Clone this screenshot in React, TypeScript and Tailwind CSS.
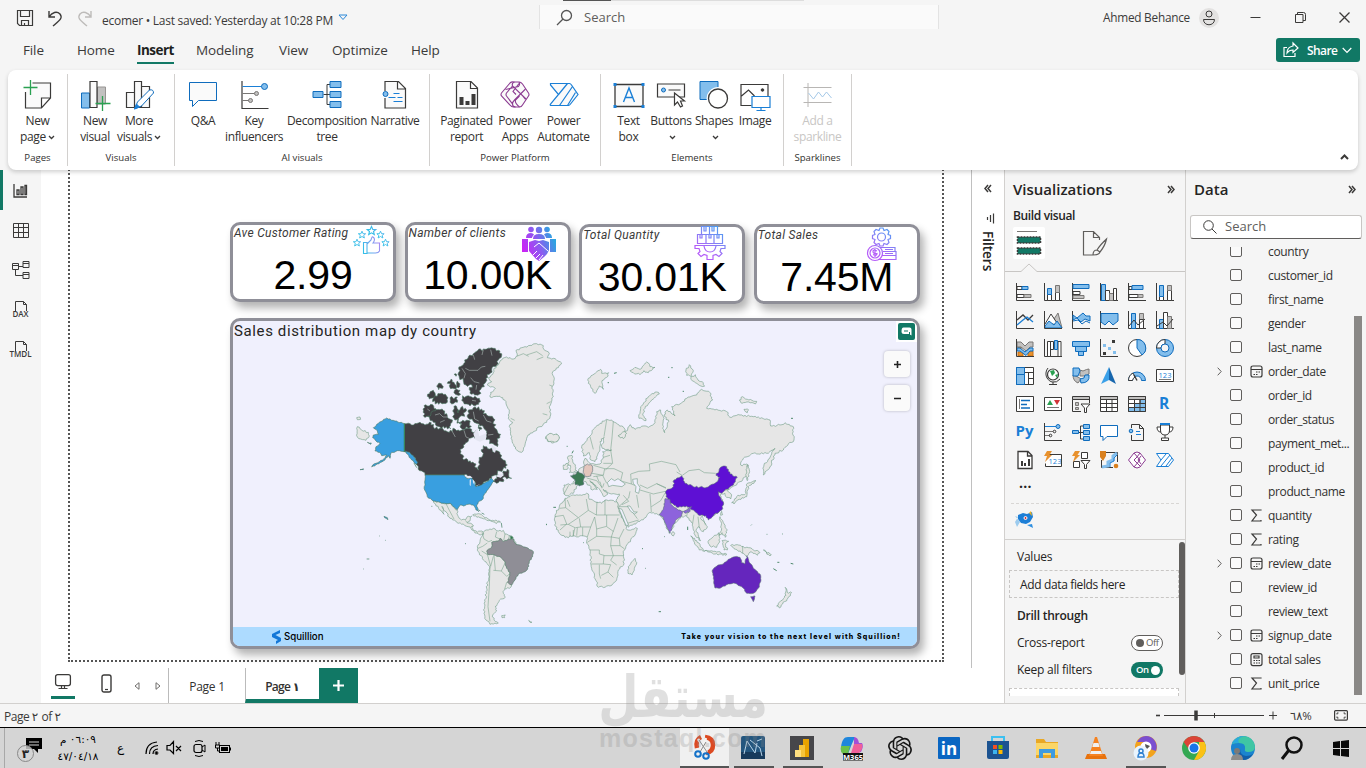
import type { ReactNode } from 'react'
import { SiOpenai } from 'react-icons/si'

const DARK = '#3b3a39'
const BLUE = '#1a7fd6'
const LIGHT = '#83beec'
const GRAY = '#c2c1c0'

type IconProps = {
  w?: number
  h?: number
  box?: string
  className?: string
  children: ReactNode
}

const Icon = ({ w = 18, h, box, className, children }: IconProps) => (
  <svg
    width={w}
    height={h ?? w}
    viewBox={box ?? `0 0 ${w} ${h ?? w}`}
    fill="none"
    stroke={DARK}
    strokeWidth={1}
    className={`shrink-0 overflow-visible ${className ?? ''}`}
  >
    {children}
  </svg>
)

const Chevron = ({ className }: { className?: string }) => (
  <Icon w={7} h={5} className={`inline-block ${className ?? ''}`}>
    <path d="M1 1l2.5 2.5L6 1" strokeWidth={1.3} />
  </Icon>
)

/* Title bar */

const TitleBar = () => (
  <header className="flex h-[35px] items-center text-xs text-[#3b3a39]">
    <div className="flex w-[93px] items-center gap-3.5 pl-[17px]">
      <Icon w={16}>
        <path d="M.5.5h15v15h-13l-2-2zM3.500.5v6h9v-6M4.500 15.500v-5h7v5M7.500 13v2" strokeWidth={1.2} />
      </Icon>
      <Icon w={16}>
        <path d="M2 1v6h6M2 7C5 2 10 1 13 4c3 4 0 6-7 12" strokeWidth={1.4} />
      </Icon>
      <Icon w={16}>
        <path d="M14 1v6H8M14 7C11 2 6 1 3 4c-3 4 0 6 7 12" stroke="#bdbbb9" strokeWidth={1.4} />
      </Icon>
    </div>
    <div className="flex w-[446px] items-center gap-[5px] pt-1.5 pl-[9px]">
      <span className="w-[231px] text-[12px] tracking-[-0.022em] whitespace-nowrap">
        ecomer • Last saved: Yesterday at 10:28 PM
      </span>
      <Icon w={10} h={7} className="mb-1.5">
        <path d="M1 1h8L5 5.500z" stroke="#2b88d8" />
      </Icon>
    </div>
    <div className="h-full w-[400px]">
      <div className="mx-6 flex h-[5px] items-start">
        <div className="h-px w-12 bg-[#555]" />
        <div className="h-px w-[193px] bg-[#ddd]" />
      </div>
      <div className="flex h-6 items-center gap-[11px] border-x border-[#e3e3e3] bg-[#fafafa] pl-4">
        <Icon w={17}>
          <path d="M15.500 6.500a5 5 0 1 1-10 0a5 5 0 1 1 10 0M7 10l-6 6" stroke="#555" strokeWidth={1.300} />
        </Icon>
        <span className="pt-px text-[13px] text-[#605e5c]">Search</span>
      </div>
    </div>
    <div className="flex grow items-center justify-end">
      <span className="text-[11.8px] tracking-[-0.02em]">Ahmed Behance</span>
      <div className="ml-[9px] flex size-5 items-center justify-center rounded-full bg-[#e3e2e1]">
        <Icon w={14} h={16}>
          <circle cx="7" cy="4" r="3" />
          <path d="M1.500 9.500h11c0 7-11 7-11 0z" />
        </Icon>
      </div>
      <Icon w={11} className="ml-[31px]">
        <path d="M.5 5.500h10" />
      </Icon>
      <Icon w={11} className="ml-[34px]">
        <path d="M.5 2.500h7.500v8H.5zM2.500 2.500V.5h6q2 0 2 2v6H8" />
      </Icon>
      <Icon w={11} className="mr-4 ml-[33px]">
        <path d="M.5.5l10 10M10.500.5l-10 10" strokeWidth={1.300} />
      </Icon>
    </div>
  </header>
)

const Menu = () => (
  <nav className="flex h-[35px] items-start pt-[3px] text-[13.5px] tracking-[-0.01em] text-[#3b3a39]">
    <span className="w-[55px] pt-0.5 pl-[23px]">File</span>
    <span className="w-[81px] pt-0.5 pl-[22px]">Home</span>
    <span className="ml-px h-[26px] w-[37px] border-b-2 border-[#117865] pt-0.5 text-center font-bold tracking-[-0.04em] text-[#201f1e]">
      Insert
    </span>
    <span className="w-[83px] pt-0.5 pl-[22px]">Modeling</span>
    <span className="w-[53px] pt-0.5 pl-[22px]">View</span>
    <span className="w-[79px] pt-0.5 pl-[22px]">Optimize</span>
    <span className="pt-0.5 pl-[22px]">Help</span>
    <div className="mr-1.5 ml-auto flex h-6 w-[84px] items-center rounded-[3px] bg-[#117865] pl-[7px] text-xs font-semibold text-white">
      <Icon w={16}>
        <path d="M4 5.500H1v9h11V11M10 1l5 5-5 4.500V8Q6 8 4 11Q4 5 10 4z" stroke="#fff" strokeWidth={1.200} />
      </Icon>
      <span className="ml-2 w-[35px] pt-px tracking-[-0.05em]">Share</span>
      <Icon w={10} h={7}>
        <path d="M.7 1L5 5.500 9.300 1" stroke="#fff" strokeWidth={1.200} />
      </Icon>
    </div>
  </nav>
)

/* Ribbon */

const ChatShape = () => <path d="M1 2.500h27v18H10l-6 6v-6H1z" stroke="#0f6cbd" fill="#fafafa" />

const ribbonIcons: Record<string, ReactNode> = {
  newPage: (
    <>
      <path d="M9 3h18v15l-9 10H2V12M27 18h-9v10" fill="#fafafa" strokeWidth={1.200} />
      <path d="M7 0v15M0 7.500h14" stroke="#2aa151" strokeWidth={1.300} />
    </>
  ),
  newVisual: (
    <>
      <path d="M1 13h8v15H1z" fill={LIGHT} stroke="#0f6cbd" />
      <path d="M17 7h8v17h-8z" fill={GRAY} stroke="#979593" />
      <path d="M9.500 1.500h7v26h-7z" fill="#fafafa" strokeWidth={1.200} />
      <path d="M22 16v15M15 23.500h15" stroke="#2aa151" strokeWidth={1.300} />
    </>
  ),
  moreVisuals: (
    <>
      <path d="M2 12.500h8v15H2zM10 1.500h7v26h-7zM17 6.500h8v21h-8z" fill="#fafafa" strokeWidth={1.200} />
      <path d="M10 29l3-7L25 10q4-1 4 3L17 26z" fill="#fff" stroke="#0f6cbd" />
      <path d="M10 29l2-5 3 3z" fill={BLUE} stroke={BLUE} />
    </>
  ),
  chat: <ChatShape />,
  influencers: (
    <>
      <path d="M2.500 1v27.500H29" strokeWidth={1.200} />
      <path d="M3 6.500h19" stroke={BLUE} />
      <path d="M3 13.500h12M3 20.500h7" stroke="#797775" />
      <circle cx="25" cy="6.500" r="3" fill={LIGHT} stroke="#0f6cbd" />
      <circle cx="17" cy="13.500" r="2" fill={GRAY} stroke="#797775" />
      <circle cx="11" cy="20.500" r="2" fill={GRAY} stroke="#797775" />
    </>
  ),
  tree: (
    <>
      <path d="M11 14.500h7M14.500 4.500v20M14.500 4.500h4M14.500 24.500h4" />
      <path
        d="M.5 11.500h10v6H.5zM17.500 1.500h11v6h-11zM17.500 11.500h11v6h-11zM17.500 21.500h11v6h-11z"
        fill={LIGHT}
        stroke="#0f6cbd"
      />
    </>
  ),
  narrative: (
    <>
      <path d="M4.500 11V1.500H18l7 7V28H4.500V18M17 1.500V9h8" strokeWidth={1.200} fill="#fafafa" />
      <path d="M13 13.500h6M8 17.500h7M17 17.500h5M13 21.500h9" stroke={BLUE} />
      <circle cx="5" cy="14" r="2.500" fill={LIGHT} stroke="#0f6cbd" />
    </>
  ),
  paginated: (
    <>
      <path d="M4 1.500h14.500L25 8v20H4zM18 2v6.500h7" strokeWidth={1.200} fill="#fafafa" />
      <path d="M7 17h4v8H7zM13 21h4v4h-4zM19 14h4v11h-4z" fill={DARK} stroke="none" />
    </>
  ),
  apps: (
    <g stroke="#8c3c92" strokeWidth={1.100}>
      <path d="M9.500 3q1.500-1.500 4-1l5 0q2 0 3.500 2L28 13q1 1.500 0 3l-6 9q-1 2-3 2h-6q-2 0-3.500-2L1 16q-1-1.500 0-3z" fill="#fafafa" />
      <path d="M14 2q-3 1-2 4l13.500 13M18.500 2Q20 4 18 6.500L5 9.500M12 6L6 13q-1 1.500 0 3l6 8q0 3 3 3M12 24q0-2 2-4L25 9M15.500 14.500l-3-3 6-8M19 27q-5-4-4-7l4-4M21 14.500l4 5" />
    </g>
  ),
  automate: (
    <g stroke={BLUE} strokeWidth={1.200}>
      <path d="M1 3.500h19q1 0 2 1.500l6.500 9.500L21 24q-1 1.500-2 1.500H2Q0 25.500 1 24l8-9.500L1 5z" fill="#fafafa" />
      <path d="M10 25.500l13-19M18 25.500l8-13M9 14.500l9-11" />
    </g>
  ),
  textBox: (
    <>
      <path d="M.5 4.500h28v22H.5z" strokeWidth={1.300} fill="#fafafa" />
      <path d="M-1 3h3v3h-3zM27 3h3v3h-3zM-1 25h3v3h-3zM27 25h3v3h-3z" fill={BLUE} stroke="none" />
      <path d="M9 22l5.500-14L20 22M11 17.500h7" stroke={BLUE} strokeWidth={1.400} />
    </>
  ),
  buttons: (
    <>
      <path d="M1 4h27v13H1z" fill="#fafafa" strokeWidth={1.200} />
      <circle cx="7" cy="10" r="2" fill={LIGHT} stroke="#0f6cbd" />
      <path d="M12 10h12" />
      <path d="M18 13v12l3-3 3 5 2-1-2-5h4z" fill="#fff" strokeWidth={1.200} />
    </>
  ),
  shapes: (
    <>
      <path d="M.5 1.500h18v18H.5z" fill={LIGHT} stroke="#0f6cbd" />
      <circle cx="18.500" cy="18.500" r="11" fill="#fff" stroke="#fff" />
      <circle cx="18.500" cy="18.500" r="9.500" fill="#fff" strokeWidth={1.300} />
    </>
  ),
  image: (
    <>
      <path d="M11 25.500H.5V4.500h27V16M1 16l7-6 6 6" fill="none" strokeWidth={1.200} />
      <circle cx="22" cy="10" r="1.300" fill={DARK} />
      <path d="M11.500 16.500h18v11h-18zM20.500 28v3M16 30.500h9" fill="#fff" stroke={BLUE} strokeWidth={1.200} />
    </>
  ),
  sparkline: (
    <>
      <path d="M4.500 3v24M0 7.500h28M0 22.500h28" stroke="#b8b6b4" />
      <path d="M5 13l5 6 5-7 4 5 4-5 5 6" stroke="#a5c9e8" />
    </>
  ),
}

type RibbonItem = { icon: string; lines: string[]; width: string; drop?: boolean }

const ribbonGroups: { name: string; frame: string; row?: string; items: RibbonItem[]; muted?: boolean }[] = [
  {
    name: 'Pages',
    frame: 'w-[60px]',
    items: [{ icon: 'newPage', lines: ['New', 'page'], width: 'w-[59px]', drop: true }],
  },
  {
    name: 'Visuals',
    frame: 'w-[107px]',
    row: 'pr-[7px]',
    items: [
      { icon: 'newVisual', lines: ['New', 'visual'], width: 'w-[43px]' },
      { icon: 'moreVisuals', lines: ['More', 'visuals'], width: 'w-[45px]', drop: true },
    ],
  },
  {
    name: 'AI visuals',
    frame: 'w-[255px]',
    row: 'pl-[5px]',
    items: [
      { icon: 'chat', lines: ['Q&A'], width: 'w-[35px]' },
      { icon: 'influencers', lines: ['Key', 'influencers'], width: 'w-[67px]' },
      { icon: 'tree', lines: ['Decomposition', 'tree'], width: 'w-[79px]' },
      { icon: 'narrative', lines: ['Narrative'], width: 'w-[57px]' },
    ],
  },
  {
    name: 'Power Platform',
    frame: 'w-[171px]',
    items: [
      { icon: 'paginated', lines: ['Paginated', 'report'], width: 'w-[57px]' },
      { icon: 'apps', lines: ['Power', 'Apps'], width: 'w-[40px]' },
      { icon: 'automate', lines: ['Power', 'Automate'], width: 'w-[57px]' },
    ],
  },
  {
    name: 'Elements',
    frame: 'w-[183px]',
    row: 'pl-px',
    items: [
      { icon: 'textBox', lines: ['Text', 'box'], width: 'w-[39px]' },
      { icon: 'buttons', lines: ['Buttons', ''], width: 'w-[46px]', drop: true },
      { icon: 'shapes', lines: ['Shapes', ''], width: 'w-[40px]', drop: true },
      { icon: 'image', lines: ['Image'], width: 'w-[42px]' },
    ],
  },
  {
    name: 'Sparklines',
    frame: 'w-[68px]',
    muted: true,
    items: [{ icon: 'sparkline', lines: ['Add a', 'sparkline'], width: 'w-[67px]' }],
  },
]

const Ribbon = () => (
  <section className="relative z-10 mx-2 flex h-[100px] rounded-[8px] bg-white pt-1 shadow-[0_2px_4px_rgba(0,0,0,0.18)]">
    {ribbonGroups.map((group) => (
      <div key={group.name} className={`h-[92px] border-r border-[#d2d0ce] pt-[5px] ${group.frame}`}>
        <div className={`flex h-[71px] justify-center ${group.row ?? ''}`}>
          {group.items.map((item) => (
            <div key={item.icon} className={`flex flex-col items-center ${item.width}`}>
              <Icon w={30} h={31} box="-.5 -1 30 31" className="mb-1">
                {ribbonIcons[item.icon]}
              </Icon>
              {item.lines.map((line, i) => (
                <div
                  key={i}
                  className={`-mt-px mb-px h-4 text-[12px] leading-4 tracking-[-0.03em] whitespace-nowrap ${group.muted ? 'text-[#c8c6c4]' : 'text-[#323130]'}`}
                >
                  {line}
                  {item.drop && i === 1 && <Chevron className="ml-0.5" />}
                </div>
              ))}
            </div>
          ))}
        </div>
        <div className="text-center text-[9.600px] leading-4 text-[#323130]">{group.name}</div>
      </div>
    ))}
    <div className="flex grow items-end justify-end pr-[9px] pb-2.5">
      <Icon w={9} h={6}>
        <path d="M1 5l3.500-3.500L8 5" strokeWidth={2} />
      </Icon>
    </div>
  </section>
)

/* Left rail */

const Rail = () => (
  <aside className="w-[41px] shrink-0 bg-[#f5f5f5] text-[#3b3a39]">
    <div className="flex h-10 items-center border-l-[3px] border-[#117865] pl-2.5">
      <Icon w={15}>
        <path d="M1 1v13h13M4 7h2v4.500H4zM8 4h2v7.500H8zM12 2.500h1.500v9H12z" strokeWidth={1.300} />
      </Icon>
    </div>
    <div className="flex h-10 items-center justify-center">
      <Icon w={16} h={15}>
        <path d="M.5.5h15v14H.5zM.5 4.500h15M.5 9.500h15M5.500.5v14M10.500.5v14" />
      </Icon>
    </div>
    <div className="flex h-10 items-center justify-center">
      <Icon w={18}>
        <path d="M.5 2.500h6v6h-6zM11 .5h6v6h-6zM11 11.500h6v6h-6zM3.500 9v5.500H11M7 5.500h4M.5 4.500h6M11 2.500h6M11 13.500h6" />
      </Icon>
    </div>
    {['DAX', 'TMDL'].map((name) => (
      <div key={name} className="flex h-10 flex-col items-center pt-[11px]">
        <Icon w={14} h={10}>
          <path d="M1.500 10V.5h8l3 3V10M9.500.5v3h3" />
        </Icon>
        <span className="-mt-px h-2 text-[8px] leading-[8px] font-semibold">{name}</span>
      </div>
    ))}
  </aside>
)

/* KPI cards */

const STAR = 'M0-4.500l1.300 3h3l-2.300 2 .8 3L0 1.800l-2.800 1.700.8-3-2.300-2h3z'

const cardArt: Record<string, ReactNode> = {
  rating: (
    <g stroke="url(#cyanViolet)" strokeWidth={1.100}>
      <path d={STAR} transform="translate(3 18) scale(.85)" />
      <path d={STAR} transform="translate(8 10) scale(.85)" />
      <path d={STAR} transform="translate(17.500 6)" />
      <path d={STAR} transform="translate(26.500 10) scale(.85)" />
      <path d={STAR} transform="translate(31.500 18) scale(.85)" />
      <path d="M9.500 17.500H13v11H9.500zM13 19l4-4q1-4 2-3 3 2 0 6h6.500v8q-1 2-4 2H13" />
    </g>
  ),
  clients: (
    <g stroke="none" fill="url(#magentaBlue)">
      <circle cx="10" cy="4.500" r="2.800" />
      <circle cx="18" cy="5" r="3.200" />
      <circle cx="26" cy="4.500" r="2.800" />
      <path d="M5 13q0-5 5-5 2 0 3 1.500Q11 12 11 13zM25 13q0-1-2-3.500Q24 8 26 8q5 0 5 5zM12 14q0-5 6-5t6 5z" />
      <path d="M1 14h6v13H1zM29 14h6v13h-6zM8 17l6-2 4 1 4-1 6 2v8l-2 4-3 3-5 4-3-2-7-8z" />
      <path d="M13 22l5-4 9 8M12 30l4-4M15 33l4-4M18 35l4-5" stroke="#fff" strokeWidth={1} fill="none" />
    </g>
  ),
  quantity: (
    <g stroke="url(#blueViolet)" strokeWidth={1.200}>
      <path d="M7.500 9.500V1.500h8v8M15.500 1.500h8v8M3.500 9.500h25v9h-25zM12 9.500v9M20 9.500v9M10 2v4h2V2M18 2v4h2V2M6 10v3h2v-3M15 10v3h2v-3M23 10v3h2v-3" />
      <path d="M1 20.500h30v3h-4l-1 3 2 2-3 3-3-2-3 1v4h-6v-4l-3-1-3 2-3-3 2-2-1-3H1zM10 21q1 6 6 6t6-6" />
    </g>
  ),
  sales: (
    <g stroke="url(#blueViolet)" strokeWidth={1.200}>
      <path d="M14 2h3l1 2.500 3-1 2 2-1 3 2.500 1v3L22 13.500l1 3-2 2-3-1-1 2.500h-3l-1-2.500-3 1-2-2 1-3-2.500-1v-3L9 8.500l-1-3 2-2 3 1z" />
      <circle cx="15.500" cy="11" r="4" />
      <circle cx="9" cy="27" r="7.500" />
      <circle cx="9" cy="27" r="5" />
      <path d="M11 25q-4-2-4 .5t4 2q0 3-4 1M9 23v8M14 21.500h15v4H17M17 25.500h13v4H17M16 29.500h14v4H12M19 23.500h8M19 27.500h8" />
    </g>
  ),
}

const Gradients = () => (
  <svg width="0" height="0" className="absolute">
    <defs>
      <linearGradient id="cyanViolet" gradientUnits="userSpaceOnUse" x1="8" y1="20" x2="28" y2="12">
        <stop offset="0" stopColor="#35bfe8" />
        <stop offset="0.500" stopColor="#7f9df0" />
        <stop offset="1" stopColor="#c77df5" />
      </linearGradient>
      <linearGradient id="magentaBlue" gradientUnits="userSpaceOnUse" x1="2" y1="26" x2="34" y2="14">
        <stop offset="0" stopColor="#cc22f5" />
        <stop offset="0.500" stopColor="#8a5cf0" />
        <stop offset="1" stopColor="#28a8e0" />
      </linearGradient>
      <linearGradient id="blueViolet" gradientUnits="userSpaceOnUse" x1="30" y1="0" x2="12" y2="28">
        <stop offset="0" stopColor="#38a4f0" />
        <stop offset="0.500" stopColor="#7a88f5" />
        <stop offset="1" stopColor="#b45cf8" />
      </linearGradient>
    </defs>
  </svg>
)

type CardProps = { title: string; value: string; art: string; artPos: string; low?: boolean }

const Card = ({ title, value, art, artPos, low }: CardProps) => (
  <div
    className={`relative h-20 w-[166px] rounded-[10px] border-[3px] border-[#8f8f98] bg-white shadow-[4px_6px_8px_rgba(0,0,0,0.3)] ${low ? 'mt-0.5' : ''}`}
  >
    <div className="h-4 pl-px font-['Roboto'] text-[12px] leading-4 tracking-[0.025em] text-[#3a3a3a] italic">
      {title}
    </div>
    <div className="pt-px text-center font-['Liberation_Sans'] text-[41px] leading-[66px] tracking-[-0.005em] text-black">
      <span className="relative">{value}</span>
    </div>
    <Icon w={36} className={`absolute ${artPos}`}>
      {cardArt[art]}
    </Icon>
  </div>
)

/* World map. Outlines are point lists, roughened between points to look like a coast. */

const noise = (n: number) => {
  const s = Math.sin(n * 12.9898) * 43758.5453
  return s - Math.floor(s) - 0.5
}

const coast = (points: string, rough = 0.350) => {
  const pts = points.split(' ').map((p) => p.split(',').map(Number))
  const out: string[] = []
  pts.forEach(([x, y], i) => {
    const [nx, ny] = pts[(i + 1) % pts.length]
    const dx = nx - x
    const dy = ny - y
    const len = Math.hypot(dx, dy)
    const steps = Math.max(1, Math.round(len / 5))
    out.push(`${x},${y}`)
    if (len > 90 || (x === 193 && nx === 193)) return
    for (let k = 1; k < steps; k++) {
      const t = k / steps
      const off = noise(x + y * 3 + k * 7) * rough * 16
      out.push(`${(x + dx * t - (dy / len) * off).toFixed(1)},${(y + dy * t + (dx / len) * off).toFixed(1)}`)
    }
  })
  return `M${out.join('L')}Z`
}

const west: { fill: string; rough?: number; shapes: string[] }[] = [
  {
    fill: '#e6e6e6',
    shapes: [
      '442,150 455,140 445,128 458,118 462,100 475,90 485,75 500,66 520,72 532,62 528,46 545,38 565,32 590,26 610,32 614,46 628,56 622,68 640,70 665,84 655,98 638,110 643,130 636,160 640,185 628,215 632,240 620,262 600,275 580,290 562,305 555,330 545,352 530,345 518,325 512,300 508,275 518,262 505,250 508,225 498,205 488,188 470,184 450,186 452,172 466,160',
      '617,306 626,298 640,300 650,297 658,308 650,320 635,324 622,318',
      '52,275 65,285 85,292 88,303 78,316 62,312 52,306',
      '50,248 60,246 62,253 52,254',
      '280,498 300,502 318,506 330,505 340,515 352,526 355,545 365,555 378,553 382,545 395,543 390,558 382,562 397,568 400,586 412,592 426,588 430,597 420,600 405,594 390,576 370,567 350,562 330,550 318,530 306,514 312,538 296,520',
      '398,540 415,536 440,548 452,556 440,556 420,548',
      '452,558 468,555 482,562 468,566',
      '412,635 420,620 425,605 430,592 445,585 460,580 475,588 490,586 495,597 510,602 522,612 528,628 500,690 510,720 515,750 508,760 495,762 490,775 496,786 478,796 465,815 470,828 458,840 462,855 475,864 450,868 438,855 432,835 435,800 440,760 446,720 450,695 430,675 415,650',
      '485,842 496,840 494,848 486,848',
      '566,856 576,862 570,862',
    ],
  },
  {
    fill: '#414044',
    rough: 0.650,
    shapes: [
      '193,350 193,266 215,270 240,262 255,270 268,262 280,275 300,280 322,290 345,282 370,285 388,280 395,290 410,285 412,300 405,310 395,308 385,318 370,330 363,350 368,370 385,380 402,385 410,398 416,405 420,388 418,375 428,362 425,350 430,332 440,335 455,340 462,352 470,347 480,358 490,375 502,390 498,400 480,408 465,420 455,430 440,438 425,450 405,455 403,440 395,428 372,420 255,420 245,408 235,395 230,380 215,362 203,352',
      '465,432 475,420 492,418 490,408 502,402 506,418 515,430 500,432 492,425 490,440 470,445 456,440',
      '372,85 385,65 400,56 412,48 440,42 460,40 480,48 485,62 475,75 470,90 455,105 448,118 438,130 435,145 424,160 418,178 395,178 388,164 396,150 378,150 370,138 358,128 356,102 366,92',
      '385,225 400,218 425,222 440,240 460,250 465,280 482,298 474,318 472,335 455,325 435,310 440,295 430,275 402,262 385,250',
      '272,228 300,224 320,236 336,262 332,282 300,276 280,262 262,244',
      '252,212 272,208 288,222 270,244 250,242',
      '338,228 348,212 354,234 362,218 376,220 374,244 356,250 362,268 342,250',
      '368,182 395,186 418,190 416,208 385,208 370,200',
      '330,188 352,186 352,202 330,202',
      '285,182 300,176 320,184 322,202 296,208 278,200',
      '262,184 280,166 286,178 268,192',
      '290,154 304,146 308,160 296,164',
      '324,140 334,132 342,142 350,156 338,160 328,152',
      '352,138 360,146 356,158 350,150',
      '344,166 360,166 362,178 346,178',
      '360,262 384,256 394,274 376,282 360,276',
      '416,270 426,282 418,288',
      '342,118 348,116 348,124',
    ],
  },
  {
    fill: '#399fe0',
    rough: 0.2,
    shapes: [
      '255,420 372,420 380,430 395,430 405,440 408,455 425,450 440,440 455,430 462,438 450,455 440,468 432,480 430,490 415,502 410,510 416,530 408,525 400,510 385,508 370,513 362,510 352,524 340,515 330,505 318,506 300,502 280,498 262,485 254,465 254,440',
      '100,278 118,262 140,249 165,258 193,266 193,350 178,347 168,349 155,352 150,370 145,362 130,378 112,387 95,396 98,390 118,380 135,368 140,360 125,362 118,352 105,348 108,335 120,325 108,318 98,308 100,300 115,298 112,288',
      '193,348 208,352 222,366 233,382 230,388 215,375 203,358',
      '82,322 94,324 92,328',
      '60,404 70,401 70,404',
      '132,544 142,548 144,554 138,550',
    ],
  },
  {
    fill: '#8f8e96',
    rough: 0.250,
    shapes: [
      '455,622 475,618 480,610 490,620 505,612 520,612 528,628 545,632 565,640 580,650 578,665 568,680 563,702 550,712 535,718 525,735 515,750 502,742 507,726 510,712 500,700 495,680 480,665 462,660 442,658 442,645 455,636',
    ],
  },
  { fill: '#2f7a4d', shapes: ['510,604 520,608 512,614'] },
]

const east: { fill: string; rough?: number; shapes: string[] }[] = [
  {
    fill: '#e6e6e6',
    shapes: [
      '125,290 138,275 150,258 160,238 180,220 200,208 215,210 232,222 252,234 260,250 250,266 234,258 244,250 262,242 270,224 285,238 310,228 325,232 345,218 350,185 362,180 370,200 368,225 374,248 386,215 372,195 382,180 405,198 395,170 420,162 440,145 470,135 485,118 510,128 518,150 500,175 530,178 560,185 570,202 600,195 640,200 690,210 692,228 720,225 735,218 760,230 760,275 745,282 730,300 705,310 690,350 670,375 672,345 695,312 705,295 680,310 640,310 610,325 602,345 625,345 622,375 600,395 590,405 570,415 562,422 575,435 572,447 560,442 555,430 545,432 540,435 550,460 545,480 525,495 505,500 490,495 482,505 502,530 490,545 475,530 468,540 482,572 465,555 458,520 440,498 425,500 405,520 388,550 375,520 360,495 340,488 325,490 318,502 290,518 265,532 250,510 235,475 228,450 238,432 215,432 190,418 204,432 192,440 180,420 160,400 150,392 172,418 158,420 138,395 112,406 100,430 80,437 72,432 72,405 100,402 104,385 92,378 110,366 130,350 135,325 150,340 180,342 190,322 188,305 215,300 195,300 185,290 192,262 180,275 180,300 165,335 152,330 148,308 130,318',
      '75,445 100,435 145,432 148,448 165,455 185,460 195,450 230,455 235,475 250,510 262,540 292,535 285,555 260,585 250,610 252,640 235,660 230,690 210,708 175,712 170,695 155,655 150,600 140,580 140,560 100,558 75,562 55,545 44,525 45,495 58,470',
      '265,650 285,625 290,637 276,675 264,670',
      '85,318 96,316 98,330 106,350 110,362 88,368 92,352 84,340',
      '70,345 82,340 82,358 70,358',
      '145,85 158,75 182,58 185,70 206,68 200,82 186,92 190,118 178,108 166,130 152,110 145,100',
      '270,62 285,52 300,58 320,36 330,50 345,52 325,68 312,62 300,74 280,68',
      '297,205 302,170 325,140 350,126 358,132 335,150 315,175 308,195 318,212',
      '438,60 448,44 460,62 454,80 440,76',
      '452,84 466,74 474,90 490,98 494,108 478,106 466,98',
      '598,150 608,140 622,148 650,154 646,162 626,156 606,160',
      '612,178 626,180 622,188',
      '18,260 30,250 52,254 58,264 48,276 24,274',
      '575,458 590,440 618,430 622,400 632,398 648,392 625,410 620,440 598,448 582,462',
      '622,345 628,360 622,392 618,378',
      '540,500 548,512 562,540 556,562 546,548 534,560 545,536',
      '452,558 470,572 488,595 494,604 478,600 464,582',
      '504,575 520,560 536,548 540,566 530,592 510,588',
      '494,602 530,606 560,612 558,616 520,612',
      '546,572 566,574 556,582 562,600 552,600',
      '572,586 592,584 610,590 636,596 660,608 652,616 630,606 622,618 604,608 582,596',
      '670,600 694,614 690,618',
      '398,545 404,550 400,558 394,552',
      '545,484 548,494 542,496',
      '735,712 742,728 755,728 744,744 728,762 718,774 710,768 730,746 738,736',
    ],
  },
  {
    fill: '#5e10d4',
    rough: 0.3,
    shapes: [
      '376,425 400,410 402,390 425,377 435,400 460,410 500,412 525,400 540,382 528,376 545,350 560,350 570,372 592,382 580,405 555,420 545,430 535,425 540,440 550,455 545,480 520,497 505,510 498,497 475,495 460,480 440,468 415,472 395,460 378,440',
    ],
  },
  {
    fill: '#8d63dc',
    rough: 0.2,
    shapes: [
      '375,446 390,448 392,462 415,480 428,484 425,498 410,508 398,525 390,550 380,530 370,502 358,494 370,478',
      '430,484 455,470 450,484 438,490',
    ],
  },
  {
    fill: '#6526bd',
    rough: 0.250,
    shapes: [
      '517,660 530,648 550,642 565,628 585,620 600,622 605,638 615,642 620,618 630,640 640,655 660,672 662,695 655,715 640,730 620,730 610,715 600,708 585,700 565,702 545,712 525,714 522,690',
      '632,740 645,738 640,755',
    ],
  },
  { fill: '#3c7a55', rough: 0.3, shapes: ['92,378 104,374 114,364 124,370 134,378 130,390 132,402 118,408 106,404 104,388'] },
  { fill: '#e3c6bd', rough: 0.2, shapes: ['132,350 142,342 156,346 158,362 152,378 138,380 130,368'] },
]

const westBorders =
  'M318 506l10 20 14 26M376 556l8 10M392 576l8-4M426 592l6 20 14 8 10-4M470 590l-4 16 14 6M495 597l-4 20M508 602l-2 10M414 640l14-6 14-10M425 648l16 10M442 658l10 36M452 694l8-30M462 660l4 46M460 706l24 2 12-26M484 708l16 16 10-8M450 695l-2 60-4 60 6 44M500 742l-6 20M530 64l20-8 16 8M560 60l30-10 18 12M590 74l20-8M512 250l12 6M632 200l-12 6M628 150l10 4M622 240l-14-4'

const arcticChannels =
  'M376 100l12 6 26 0 10-10 12-2M400 60l4 14M430 44l-4 16M452 44l4 18M392 128l10 12 16 4M366 100l10 16-4 14M410 150l-2 14M285 240l14-4 10 10 14 0M300 262l14-6M400 230l4 22 12 6M430 240l10 18 14 4M444 300l16-2M396 196l12 2M262 222l8 6M336 288l10 18M372 286l6 20 14 6'

const eastBorders =
  'M75 447l2 26-18 2M77 473l38 30-30 20-24 2M115 503l30-22-6-34M145 481l24 14 2-40M169 495h26v-45M195 495h44M44 500l26-4 10 26M60 540l20-18M85 523l20 10-6 26M118 505l4 26-16 2M122 531l30 0 12-30M152 531l-10 30M164 501l6 36 30-8 0-34M200 530l20 14 14-40M170 537l0 22-28 18M170 559l44 2 6-18M214 561l24 4 14-28M238 565l2 22 14 10M214 561l-2 26 8 30-28 0M150 600l28 0 0 12 14 4M220 617l-8 14 18 14M192 616l-2 26h-36M190 642l22 2-8 22M178 644l0 28 4 14M204 666l-20 10M204 666l16 16M220 617l30 0M212 587l28 0M150 260l10 38M200 210l-8 50M220 214l-4 50-4 36M212 300l6 40-22 20M190 322l20-6M190 340l26 0M160 346l34 10-4 20-34-6M194 356l28 0 26 12-6 24-30 8M160 380l28-4 12 24M140 384l30 8 16 20M170 378l8 20M72 432l14-26M240 392l34 10M274 402l-2-30 24-8 34-2-2-20 36-8 44 10 12 22M410 366l16 10M427 376l20-14 30-4 16 10 34 2M274 402l16 6M300 405l22 10 28-14 28 12M350 401l28 14M300 420l40 12 36-8M290 435l6 38M330 432l4 54M334 470l28-18 14-24M270 424l-4 20-30 26M250 436l16 18-20 10M236 470l30 0 26 36M262 520l34-10M440 498l6-24M458 520l4-26M474 500l4 34M486 496l10 28M608 588v22M555 420l14-2M82 450l8 20M100 540l0 18M90 545l0 14M112 533l-2 24M128 532l0 26M180 395l6 20M192 400l-4 12'

const WorldMap = () => (
  <svg viewBox="233 321 684 306" className="block h-[306px] w-full" strokeLinejoin="round">
    <g transform="translate(340 335) scale(.33333)" stroke="#6f9c85" strokeWidth={1.800}>
      {west.map((layer) =>
        layer.shapes.map((shape) => (
          <path key={shape} d={coast(shape, layer.rough)} fill={layer.fill} stroke={layer.rough ? '#4c7a63' : undefined} />
        )),
      )}
      <path d={westBorders} fill="none" strokeWidth={1.600} />
      <path d={arcticChannels} fill="none" stroke="#b9c9c4" strokeWidth={1.600} />
      <path
        d="M374 424l16-2 8 6-14 2zM389 436l4-4-1 22-3-4zM398 432l6 8-1 10-4-8zM408 452l14-6-12 7zM400 296l12-16 6 24 22-10-2 18-18 8-14-6zM455 330l14 10-4 14-8-8zM466 424l14-8 12 4-10 8z"
        fill="#e4e6f2"
        stroke="none"
      />
      <path d="M193 266V350" stroke="#2f8a4d" strokeWidth={2.500} />
      <path
        d="M222 384l8 14M80 672h8M70 702h2M118 603h2M135 616h2M375 626h3M618 569h3M415 524l6 4M425 534l8 4M484 564l2 14M274 514h3"
        stroke="#5b8f77"
        strokeWidth={2.500}
      />
    </g>
    <g transform="translate(540 350) scale(.33333)" stroke="#6f9c85" strokeWidth={1.800}>
      {east.map((layer) =>
        layer.shapes.map((shape) => (
          <path key={shape} d={coast(shape, layer.rough)} fill={layer.fill} stroke={layer.rough ? '#5a6f78' : undefined} />
        )),
      )}
      <path d={eastBorders} fill="none" strokeWidth={1.600} />
      <path
        d="M202 398l12-12 10 6 10-6 22 16-10 8-28-4-12 4zM278 388l14-2 0 14 8 12-4 18-10-4 2-16-8-10zM236 474l10 4 20 48-8 0zM262 468l8 0 12 18 10 0-8 6-12-8z"
        fill="#f0f0fd"
      />
      <path
        d="M222 70l8-2M203 98h4M394 53h4M384 82h4M428 124h4M80 289h3M100 302l-4 8M18 523h3M753 205h6M40 472h8M130 578h2M443 530v10M633 526l2-2M680 553h2M726 552h2M752 640l8 2M700 656l10 6M712 637h6M356 785h7M306 596h3M316 655h2M373 560h2"
        stroke="#4f8a6c"
        strokeWidth={3}
      />
    </g>
  </svg>
)

const MapCard = () => (
  <div className="relative mt-3.5 h-[331px] w-[690px] overflow-hidden rounded-[10px] border-[3px] border-[#8f8f98] bg-[#f0f0fd] shadow-[4px_6px_8px_rgba(0,0,0,0.3)]">
    <WorldMap />
    <div className="flex h-[19px] items-center bg-[#addbff] text-black">
      <Icon w={11} h={14} className="ml-[38px]">
        <path d="M9 0v3L4.500 5 10 8v3l-5 3v-3l2-1-6-3V4z" fill="#1277d8" stroke="none" />
      </Icon>
      <span className="ml-0.5 pt-px font-['Inter'] text-[9.700px] font-medium">Squillion</span>
      <span className="mr-[16px] ml-auto pt-0.5 font-['Inter'] text-[7px] font-extrabold tracking-[0.160em]">
        Take your vision to the next level with Squillion!
      </span>
    </div>
    <div className="absolute top-px left-px font-['Roboto'] text-[15px] leading-[18px] tracking-[0.041em] text-[#252423]">
      Sales distribution map dy country
    </div>
    <div className="absolute top-0 right-0 flex size-[21px] items-center justify-center bg-white">
      <div className="flex size-[17px] items-center justify-center rounded-[2px] bg-[#117865]">
        <Icon w={11} h={9}>
          <path d="M2.500.5h6q2 0 2 2v6L8 7H3Q.5 7 .5 4.500q0-4 2-4z" fill="#fff" stroke="none" />
          <path d="M3 4h4M8.500 5v3" stroke="#117865" />
        </Icon>
      </div>
    </div>
    <div className="absolute top-[30px] right-[7px] flex flex-col gap-2">
      {['M4.500 1v7M1 4.500h7', 'M1 4.500h7'].map((d) => (
        <div
          key={d}
          className="flex size-[26px] items-center justify-center rounded-[4px] bg-[#fafafa] shadow-[0_0_3px_rgba(0,0,0,0.25)]"
        >
          <Icon w={9}>
            <path d={d} strokeWidth={1.600} stroke="#222" />
          </Icon>
        </div>
      ))}
    </div>
  </div>
)

const Canvas = () => (
  <div className="flex h-[498px] overflow-hidden bg-white pl-[27px]">
    <div className="-mt-1 h-[496px] w-[876px] shrink-0 border-2 border-dotted border-[#555] pt-[54px] pl-40">
      <div className="flex gap-[8.600px]">
        <Card title="Ave Customer Rating" value="2.99" art="rating" artPos="top-0 right-[3px]" />
        <Card title="Namber of clients" value="10.00K" art="clients" artPos="top-0 right-[11px]" />
        <Card title="Total Quantity" value="30.01K" art="quantity" artPos="-top-0.5 right-[12px]" low />
        <Card title="Total Sales" value="7.45M" art="sales" artPos="-top-px right-[15px]" low />
      </div>
      <MapCard />
    </div>
    <div className="ml-[27px] flex w-[33px] flex-col items-center border-l border-[#c0c0c0] pt-3.5">
      <DoubleChevron left />
      <Icon w={10} h={11} className="mt-5 ml-1">
        <path d="M8.500.5v10M5.500 2v7M2.500 4v3" strokeWidth={1.200} />
      </Icon>
      <span className="mt-[7px] text-[13.500px] font-semibold text-[#252423] [writing-mode:vertical-rl]">Filters</span>
    </div>
  </div>
)

function DoubleChevron({ left }: { left?: boolean }) {
  return (
    <Icon w={8} h={9} className={left ? 'rotate-180' : ''}>
      <path d="M1 1l3 3.500L1 8M4 1l3 3.500L4 8" strokeWidth={1.500} />
    </Icon>
  )
}

/* Page tabs */

const PageTabs = () => (
  <div className="flex h-[35px] bg-white text-xs text-[#323130]">
    <div className="flex h-[31px] w-[44px] flex-col items-center justify-end">
      <Icon w={16} h={15} className="mb-[7px]">
        <rect x=".6" y=".6" width="14.800" height="11" rx="2" strokeWidth={1.300} />
        <path d="M3.500 14.500h9M6.500 12v2M9.500 12v2" strokeWidth={1.200} />
      </Icon>
      <div className="h-[3px] w-6 shrink-0 bg-[#117865]" />
    </div>
    <div className="flex w-[83px] items-start pt-1.5">
      <Icon w={12} h={19} className="ml-4">
        <rect x="1" y="1" width="9" height="17" rx="2" strokeWidth={1.400} />
        <path d="M4 15.500h3" strokeWidth={1.200} />
      </Icon>
      <Icon w={6} h={8} className="mt-2 ml-[21px]">
        <path d="M5 .7v6.600L1 4z" stroke="#6f6d6b" />
      </Icon>
      <Icon w={6} h={8} className="mt-2 ml-[15px]">
        <path d="M1 .7v6.600L5 4z" stroke="#6f6d6b" />
      </Icon>
    </div>
    <div className="w-[77px] border-l border-[#bbb] pt-[11px] text-center tracking-[-0.02em]">Page 1</div>
    <div className="w-[74px] border-b-4 border-l border-[#117865] border-l-[#bbb] pt-[11px] text-center font-semibold tracking-[-0.06em]">
      Page ١
    </div>
    <div className="flex w-[39px] items-center justify-center bg-[#117865]">
      <Icon w={11}>
        <path d="M5.500 0v11M0 5.500h11" stroke="#fff" strokeWidth={2.200} />
      </Icon>
    </div>
  </div>
)

/* Visualizations pane */

const Axes = () => <path d="M.5 0v17.500H18" />
const blueFill = { fill: LIGHT, stroke: '#0f6cbd' }
const grayFill = { fill: GRAY, stroke: '#797775' }

const visualIcons: ReactNode[] = [
  <><Axes /><path d="M1 3.500h5v3H1zM1 11.500h7v3H1z" fill="#fff" /><path d="M6 3.500h6v3H6z" {...blueFill} /><path d="M8 11.500h7v3H8z" {...grayFill} /></>,
  <><Axes /><path d="M3.500 11.500h4v6h-4zM11.500 9.500h4v8h-4z" fill="#fff" /><path d="M3.500 5.500h4v6h-4z" {...blueFill} /><path d="M11.500 2.500h4v7h-4z" {...grayFill} /></>,
  <><Axes /><path d="M1 1.500h16v4H1z" {...blueFill} /><path d="M1 8.500h7v3H1z" fill="#fff" /><path d="M1 12.500h11v3H1z" {...grayFill} /></>,
  <><Axes /><path d="M1.500 1.500h4v16h-4z" {...blueFill} /><path d="M5.500 7.500h4v10h-4z" fill="#fff" /><path d="M9.500 10.500h4v7h-4z" {...grayFill} /><path d="M13.500 5.500h3v12h-3z" fill="#fff" /></>,
  <><Axes /><path d="M1 3.500h3v3H1zM1 11.500h9v3H1z" fill="#fff" /><path d="M4 2.500h11v4H4z" {...blueFill} /><path d="M10 11.500h5v3h-5z" {...grayFill} /></>,
  <><Axes /><path d="M3.500 13.500h4v4h-4zM11.500 7.500h4v10h-4z" fill="#fff" /><path d="M3.500 2.500h4v11h-4z" {...blueFill} /><path d="M11.500 2.500h4v5h-4z" {...grayFill} /></>,
  <><Axes /><path d="M1 9l6-5 5 5 5-5" strokeWidth={1.300} /><path d="M1 14l6-5 4-3 6 5" stroke={BLUE} strokeWidth={1.300} /></>,
  <><path d="M8 11l6-9 4 15h-9z" {...grayFill} /><path d="M1 13l6-10 6 9" fill="#fff" /><path d="M1 17v-2l4-5 5 4 3-4 5 7z" {...blueFill} /><Axes /></>,
  <><Axes /><path d="M1 4l4 3 6-5 3 3h4v5l-5-2-4 3-4-4-4 2z" {...blueFill} /><path d="M1 10l5-1 4 4 4-3 4 2" stroke="#0f6cbd" /></>,
  <><Axes /><path d="M1 2.500h17V10l-5 4-4-4-4 4-4-3z" {...blueFill} /></>,
  <><Axes /><path d="M3.500 2.500h4v15h-4z" {...blueFill} /><path d="M11.500 2.500h4v6h-4z" {...grayFill} /><path d="M11.500 8.500h4v9h-4z" fill="#fff" /><path d="M1 15l5-6 4 5 7-6" /></>,
  <><Axes /><path d="M3.500 8.500h4v9h-4z" {...blueFill} /><path d="M7.500 1.500h4v16h-4z" fill="#fff" /><path d="M11.500 5.500h4v12h-4z" {...grayFill} /><path d="M1 15l6-4 4 4 6-7" /></>,
  <><path d="M2 13h5v4H2zM12 12h5v5h-5zM2 7h3v3H2z" fill="#e8912d" stroke="#c76f12" /><path d="M1 3h4l4 4 4-4h4v5h-3l-4 4-5-4H1z" {...grayFill} /><path d="M1 9h3l5 4 5-4h3v3h-3l-4 4.500L4 12H1z" {...blueFill} /><Axes /></>,
  <><Axes /><path d="M3.500 2.500h3v15h-3zM6.500 2.500h3v8h-3zM14 2.500h3v15h-3z" fill="#fff" /><path d="M10.500 1.500h3v9h-3z" {...blueFill} /></>,
  <path d="M.5 2.500h17v5H.5zM3.500 7.500h11v5h-11zM6.500 12.500h5v4h-5z" {...blueFill} />,
  <><Axes /><path d="M3 13h3v3H3zM12 1h3v3h-3z" fill={DARK} stroke="none" /><path d="M3 5h3v3H3zM8 8h3v3H8zM13 12h3v3h-3z" fill={LIGHT} stroke="none" /></>,
  <><circle cx="9" cy="9" r="8.500" fill="#fff" /><path d="M9 .5a8.500 8.500 0 0 1 5 15.500L9 9z" {...blueFill} /></>,
  <><circle cx="9" cy="9" r="8.500" {...blueFill} /><path d="M9 .5A8.500 8.500 0 0 0 .5 9H5a4 4 0 0 1 4-4z" fill="#fff" /><circle cx="9" cy="9" r="4" fill="#f5f5f5" stroke="#0f6cbd" /></>,
  <><path d="M.5.5h17v17H.5z" fill="#fff" /><path d="M.5.5h8v7h-8zM.5 7.500h8v10h-8z" {...blueFill} /><path d="M9 5.500h8.500M12.500 5.500v12M12.500 11.500h5" /></>,
  <><circle cx="9" cy="7.500" r="5.500" fill="#fff" strokeWidth={1.200} /><path d="M6 4l4-1 1 3-3 3zM11 8l3-1-1 4z" fill="#2aa151" stroke="none" /><path d="M4 1C0 6 2 13 8 15q5 1 8-3M9 15v2.500M5 17.500h8" /></>,
  <><path d="M8 3l3 1q4-2 6-2v5l-4 2H8zM1 8l5 2 3 2-3 4q-5-2-5-8z" {...grayFill} /><path d="M1 1h6l1 3-2 5-5 0zM17 8q1 8-8 8l-1-4 4-1 1-3z" {...blueFill} /></>,
  <><path d="M9 0l-8 17 8-4z" fill="#3ba0e8" stroke="none" /><path d="M9 0l7 17-7-4z" fill="#1766ad" stroke="none" /></>,
  <><path d="M.5 13.500a8.500 8.500 0 0 1 17 0h-4a4.500 4.500 0 0 0-9 0z" {...blueFill} /><path d="M.5 13.500A8.500 8.500 0 0 1 5 6l2 4a4.500 4.500 0 0 0-2.500 3.500z" fill="#fff" /><path d="M9 13.500L6 8" strokeWidth={1.400} /></>,
  <><path d="M.5 2.500h17v12H.5z" fill="#fff" /><text x="9" y="10.500" fontSize="7.500" textAnchor="middle" fill={BLUE} stroke="none">123</text><path d="M3 12.500h12" stroke="#797775" /></>,
  <><path d="M.5 1.500h17v15H.5z" fill="#fff" /><path d="M3.500 4v10" stroke="#797775" /><path d="M5 5.500h9M5 9.500h6M5 13h9" stroke="#0f6cbd" strokeWidth={1.600} /></>,
  <><path d="M.5 2.500h17v13H.5z" fill="#fff" /><path d="M3 10l3-5 3 5z" fill="#2aa151" stroke="none" /><path d="M10 5h6l-3 5z" fill="#d13438" stroke="none" /><path d="M3 12.500h12" stroke="#797775" /></>,
  <><path d="M.5 1.500h17v3H.5z" fill={GRAY} /><path d="M.5 4.500V16.500H9M17.500 4v4" /><path d="M3.500 7.500h3v3h-3zM3.500 12.500h3v2h-3z" {...grayFill} /><path d="M9 9h9l-3.500 4v4.500h-2V13z" fill="#fff" /></>,
  <><path d="M.5 1.500h17v15H.5z" fill="#fff" /><path d="M.5 1.500h17v3H.5z" fill={GRAY} /><path d="M.5 8.500h17M.5 12.500h17M6.500 4.500v12M12 4.500v12" /></>,
  <><path d="M.5 1.500h17v15H.5z" fill="#fff" /><path d="M12 4.500h5.500v12H.5v-4h6v-4H12z" fill={LIGHT} /><path d="M.5 1.500h17v3H.5z" fill={GRAY} /><path d="M.5 8.500h17M.5 12.500h17M6.500 4.500v12M12 4.500v12" /></>,
  <text x="8" y="14" fontSize="15.500" fontWeight="700" textAnchor="middle" fill={BLUE} stroke="none">R</text>,
  <text x="8.500" y="13" fontSize="15" fontWeight="700" textAnchor="middle" fill={BLUE} stroke="none">Py</text>,
  <><Axes /><path d="M1 3.500h11" stroke={BLUE} /><path d="M1 8.500h8M1 12.500h5" stroke="#797775" /><circle cx="14" cy="3.500" r="2" {...blueFill} /><circle cx="10.500" cy="8.500" r="1.300" /><circle cx="6.500" cy="12.500" r="1.300" /></>,
  <><path d="M6 9.500h5M8.500 3v13M8.500 3h3M8.500 16h3" /><path d="M.5 7.500h6v3h-6zM11.500 1.500h6v4h-6zM11.500 7.500h6v4h-6zM11.500 13.500h6v4h-6z" {...blueFill} /></>,
  <path d="M.5 2.500h17v11H7l-4 4v-4H.5z" fill="#fff" stroke="#0f6cbd" />,
  <><path d="M3.500 5V1.500h8l4 4v12h-12V12M11.500 1.500v4h4" /><path d="M8 8.500h4M8 11.500h5" stroke={BLUE} /><circle cx="3" cy="8" r="1.800" {...blueFill} /></>,
  <><path d="M4.500 2v5q0 5 4.500 5t4.500-5V2zM4.500 4H1q0 5 4 5M13.500 4H17q0 5-4 5M9 12v3M5.500 17.500v-2.500h7v2.500z" fill="#fff" /><path d="M4 1h10" strokeWidth={2} stroke={BLUE} /></>,
  <><path d="M2 .5h10l4 4v13H2zM11.500.5v4.500H16" fill="#fff" strokeWidth={1.300} /><path d="M5 10h2v5H5zM8 12h2v3H8zM12 8h2v7h-2z" fill={DARK} stroke="none" /></>,
  <><path d="M3.500 3.500h14v12h-16v-3" fill="#fff" /><text x="11" y="12.500" fontSize="7.500" textAnchor="middle" fill={BLUE} stroke="none">123</text><path d="M3 0h5L5.500 4H8L1 11l2-6H0z" fill="#e8912d" stroke="none" /></>,
  <><path d="M9.500 1.500h6v6h-6zM1.500 10.500h6v6h-6z" fill="#fff" /><path d="M9 9.500h9l-3.500 4v4h-2v-4z" fill="#fff" /><path d="M3 0h5L5.500 4H8L1 11l2-6H0z" fill="#e8912d" stroke="none" /></>,
  <><path d="M6 1.500h11.500V11M13 16.500H1.500V9" /><path d="M17 2l-4 3 0 4-5 2 0 4-6 1" stroke={LIGHT} strokeWidth={3} /><path d="M17 4l-3 3 0 3-4 2 0 4" stroke={BLUE} /><path d="M0 0h6v5L3 10 0 6z" fill="#d9801e" stroke="none" /><circle cx="16" cy="15" r="2.300" fill="#d9801e" stroke="none" /></>,
  <g stroke="#8c3c92"><path d="M6 2l3-1 3 1 5.500 7-5.500 7-3 1-3-1L.5 9z" fill="#fff" /><path d="M6 2l6 7-6 7M9 6l3-4M9 12l4 4M9 6L6 9l3 3M13 5l-3 4 3 4" /></g>,
  <g stroke={BLUE}><path d="M.5 2.500h12l5 6.500-5 6.500H.5L5 9z" fill="#fff" /><path d="M5 15l9-11M10 15l6-8M5 9l5-6" /></g>,
]

const Toggle = ({ on }: { on?: boolean }) =>
  on ? (
    <div className="flex h-4 w-8 items-center gap-0.5 rounded-full bg-[#117865] pl-[5px] text-[9.500px] font-semibold tracking-tighter text-white">
      On <i className="size-[9px] rounded-full bg-white" />
    </div>
  ) : (
    <div className="flex h-4 w-8 items-center gap-0.5 rounded-full border border-[#605e5c] bg-white pl-1 text-[9.500px] tracking-tighter text-[#605e5c]">
      <i className="size-2 rounded-full bg-[#605e5c]" /> Off
    </div>
  )

const VisualizationsPane = () => (
  <aside className="flex w-[182px] shrink-0 flex-col overflow-hidden border-x border-[#d2d0ce] bg-[#f5f5f5] text-xs text-[#252423]">
    <div className="flex h-[38px] items-center justify-between pr-2.5 pl-2 text-[15px] font-semibold">
      <span>Visualizations</span>
      <DoubleChevron />
    </div>
    <div className="h-[19px] pl-2 text-[12px] leading-4 font-semibold tracking-[-0.03em]">Build visual</div>
    <div className="flex h-[42px] pl-2">
      <div className="flex size-8 items-center justify-center rounded-[2px] bg-white">
        <Icon w={24} h={25}>
          <path d="M0 .5h20" stroke="#797775" />
          <path d="M.5 6h23v6H.5zM.5 17h23v6H.5z" fill="#117865" strokeDasharray="2 1" strokeWidth={1.500} />
        </Icon>
      </div>
      <Icon w={25} className="mt-1 ml-[38px]">
        <path
          d="M10 24H.5V.5h10l6 6V9M10.500.5v6h6M23.500 8Q17 14 14 19l3 2Q22 15 23.500 8zM14 19q-4 0-4 5 6 0 7-3"
          stroke="#605e5c"
          strokeWidth={1.200}
        />
      </Icon>
    </div>
    <Icon w={180} h={9} className="-mt-1.5">
      <path d="M0 8.500h16l8-7.500 8 7.500h148" fill="#f5f5f5" stroke="#c8c6c4" />
    </Icon>
    <div className="mt-[11px] grid grid-cols-[repeat(6,28px)] gap-y-2.5 pl-[11px]">
      {visualIcons.map((icon, i) => (
        <Icon key={i} w={18}>
          {icon}
        </Icon>
      ))}
    </div>
    <div className="h-[34px] pt-1.5 pl-[14px] text-sm leading-4 font-bold tracking-[0.02em]">...</div>
    <div className="mx-1.5 flex h-[36px] shrink-0 items-center border-t border-dashed border-[#d8d6d4] pl-1">
      <Icon w={20} h={18} className="mt-[-3px]">
        <path d="M0 5l3 1-3 5 2 5 3-5z" fill="#9ccbee" stroke="none" />
        <path d="M3 4l5-2 4 1 5-2 1 5-3 5-4 2-5-1-3-4z" fill="#1c7ed6" stroke="none" />
        <path d="M12 14l5-1 1 4z" fill="#2f8fe0" stroke="none" />
        <circle cx="10.500" cy="7" r="1.500" fill="#d13438" stroke="#fff" />
        <path d="M14 2l2-2 1 5z" fill="#f2b21d" stroke="none" />
      </Icon>
    </div>
    <div className="flex grow border-t border-[#d2d0ce]">
      <div className="flex w-[175px] flex-col pl-1">
        <span className="h-[30px] pt-[9px] pl-2 tracking-[-0.02em]">Values</span>
        <div className="h-7 border border-dashed border-[#c8c6c4] pt-1.5 pl-2.5 tracking-[-0.03em]">
          Add data fields here
        </div>
        <span className="mt-2.5 h-5 pl-2 font-semibold tracking-[-0.02em]">Drill through</span>
        <div className="mt-1.5 flex h-[18px] items-center justify-between pr-4 pl-2 tracking-[-0.02em]">
          Cross-report <Toggle />
        </div>
        <div className="mt-[9px] flex h-[18px] items-center justify-between pr-4 pl-2 tracking-[-0.02em]">
          Keep all filters <Toggle on />
        </div>
        <div className="mt-[9px] h-2 border border-b-0 border-dashed border-[#c8c6c4] bg-white" />
      </div>
      <div className="mt-0.5 h-[133px] w-1.5 rounded-full bg-[#605e5c]" />
    </div>
  </aside>
)

/* Data pane */

type FieldKind = 'plain' | 'date' | 'sum' | 'calc'

const fields: [string, FieldKind][] = [
  ['country', 'plain'],
  ['customer_id', 'plain'],
  ['first_name', 'plain'],
  ['gender', 'plain'],
  ['last_name', 'plain'],
  ['order_date', 'date'],
  ['order_id', 'plain'],
  ['order_status', 'plain'],
  ['payment_met...', 'plain'],
  ['product_id', 'plain'],
  ['product_name', 'plain'],
  ['quantity', 'sum'],
  ['rating', 'sum'],
  ['review_date', 'date'],
  ['review_id', 'plain'],
  ['review_text', 'plain'],
  ['signup_date', 'date'],
  ['total sales', 'calc'],
  ['unit_price', 'sum'],
]

const kindIcons: Record<FieldKind, ReactNode> = {
  plain: null,
  date: (
    <path
      d="M3 1h7q2 0 2 2v7q0 2-2 2H3q-2 0-2-2V3q0-2 2-2zM1 4.500h11M3.500 9.500h1.500M6 9.500h1.500M6 7h1.500M8.500 7H10"
      strokeWidth={1.200}
    />
  ),
  sum: <path d="M11 1.500V1H2l4.500 5L2 12h9v-1" strokeWidth={1.200} />,
  calc: (
    <path
      d="M3 .6h7q2 0 2 2v8q0 2-2 2H3q-2 0-2-2v-8q0-2 2-2zM4 3h5v2H4zM3.500 7.500H5M6 7.500h1.500M8.500 7.500H10M3.500 10H5M6 10h1.500M8.500 10H10"
      strokeWidth={1.200}
    />
  ),
}

const DataPane = () => (
  <aside className="flex w-[180px] shrink-0 flex-col bg-[#f5f5f5] pb-2 text-xs text-[#323130]">
    <div className="flex h-[38px] items-center justify-between pr-2.5 pl-2 text-[15px] font-semibold text-[#252423]">
      <span>Data</span>
      <DoubleChevron />
    </div>
    <div className="mt-[7px] mr-1 ml-1 flex h-6 items-center gap-2 rounded-[3px] border border-[#c8c6c4] border-b-[#605e5c] bg-white pl-3 text-[13px] text-[#605e5c]">
      <Icon w={14}>
        <circle cx="5.500" cy="5.500" r="4.800" />
        <path d="M9 9l4.500 4.500" />
      </Icon>
      Search
    </div>
    <div className="mt-2 flex h-[448px] overflow-hidden">
      <div className="-mt-2 grow">
        {fields.map(([name, kind]) => (
          <div key={name} className="flex h-6 items-center">
            <div className="w-11 pl-[31px]">
              {kind === 'date' && (
                <Icon w={5} h={9}>
                  <path d="M.7.700l3.500 3.800L.7 8.300" stroke="#605e5c" />
                </Icon>
              )}
            </div>
            <div className="-mt-px size-3 shrink-0 rounded-[2px] border border-[#605e5c] bg-[#fafafa]" />
            <div className="ml-2 w-[18px]">{kind !== 'plain' && <Icon w={13}>{kindIcons[kind]}</Icon>}</div>
            <span className="pt-px tracking-[-0.03em] whitespace-nowrap">{name}</span>
          </div>
        ))}
      </div>
      <div className="mt-[69px] mr-1 h-[379px] w-2 shrink-0 bg-[#8a8886]" />
    </div>
  </aside>
)

/* Status bar and taskbar */

const StatusBar = () => (
  <footer className="flex h-6 items-center border-t border-[#d2d0ce] pl-1 text-xs text-[#3b3a39]">
    <span className="pt-0.5 tracking-[-0.04em]">Page ٢ of ٢</span>
    <div className="ml-auto flex items-center pr-[18px]">
      <Icon w={125} h={13}>
        <path d="M1 6.500h4" strokeWidth={1.600} />
        <path d="M9 6.500h100M59.500 4v5M114 6.500h8M118 2.500v8" />
        <path d="M41 1.500v10" strokeWidth={3.500} />
      </Icon>
      <span className="ml-2.5 w-[25px] text-[11.500px] tracking-[-0.04em]">٦٨%</span>
      <Icon w={14} h={11} className="ml-[19px]">
        <rect x=".6" y=".6" width="12.800" height="9.500" rx="1" strokeWidth={1.200} />
        <path d="M3 4.500V3h1.500M9.500 3H11v1.500M11 6.500V8H9.500M4.500 8H3V6.500" />
      </Icon>
    </div>
  </footer>
)

const taskIcons: { art: ReactNode; open?: boolean; active?: boolean }[] = [
  {
    active: true,
    art: <><path d="M9 1Q3 4 5 12M13 1q8 1 8 8t-7 8" fill="none" stroke="#dc4a22" strokeWidth="4.500" /><path d="M6 3l9 13M14 2L9 16" stroke="#f4f4f4" strokeWidth="2.500" /><path d="M7 4l8 12M14 6L8 16" stroke="#8a8a8a" strokeWidth="1" /><circle cx="6" cy="18" r="2.800" fill="none" stroke="#1572c8" strokeWidth="2" /><circle cx="14" cy="20" r="2.800" fill="none" stroke="#1572c8" strokeWidth="2" /></>,
  },
  {
    open: true,
    art: <><rect width="24" height="23" rx="2" fill="#23567f" /><path d="M0 16h24v7H0z" fill="#173a5c" /><path d="M3 18l3-13 8 12 2-10M9 4l10 8 2 8M16 5l5-2" stroke="#b9d4e8" fill="none" /></>,
  },
  {
    open: true,
    art: <><rect width="24" height="24" fill="#46464a" /><path d="M13 3h6v18h-6z" fill="#e8a200" /><path d="M9 9h6v12H9z" fill="#f5c33b" /><path d="M5 14h6v7H5z" fill="#ffdf80" /></>,
  },
  {
    art: <><path d="M2 11C3 4 5 1 9 1h7l-4 9-3 8H5q-4-2-3-7z" fill="#1f86dc" /><path d="M2 10h9l-2 8H4q-3-2-2-8z" fill="#6cc04a" /><path d="M15 1q4 0 5 6h3q2 3-1 9l-8 1 1-8z" fill="#a44fd6" /><path d="M15 8h8q1 6-3 9h-8z" fill="#f0609a" /><path d="M4 17h20v7.500H4z" fill="#111" /><text x="14" y="23.500" fontSize="7.500" fontWeight="700" textAnchor="middle" fill="#fff">M365</text></>,
  },
  { art: <SiOpenai size={24} color="#161616" /> },
  { art: <><rect x="1" y="1" width="22" height="22" rx="1" fill="#0a66c2" /><text x="12" y="19" fontSize="17" fontWeight="700" textAnchor="middle" fill="#fff">in</text></> },
  {
    art: <><path d="M6 6V1h12v5" fill="none" stroke="#3cc0f0" strokeWidth="2" /><path d="M1 5h22v16q0 2-2 2H3q-2 0-2-2z" fill="#1c5391" /><path d="M7 9h4v4H7z" fill="#f25022" /><path d="M12.500 9h4v4h-4z" fill="#7fba00" /><path d="M7 14h4v4H7z" fill="#3cb4f0" /><path d="M12.500 14h4v4h-4z" fill="#ffb900" /></>,
  },
  { art: <><path d="M1 3h8l2 3h12v16H1z" fill="#e9a825" /><path d="M1 7h22v12H1z" fill="#fbd667" /><path d="M4 22v-9h16v9h-4v-5H8v5z" fill="#3f9be0" /></> },
  { art: <><path d="M3 18h18l2 5H1z" fill="#e8720c" /><path d="M11 1h2l6 19H5z" fill="#f58220" /><path d="M9.500 7h5l1 4H8.300zM7 15h10l1 3H6z" fill="#f0f0f0" /></> },
  {
    open: true,
    art: <><circle cx="13" cy="11" r="11" fill="#f2a31d" /><path d="M13 0a11 11 0 0 1 10 15l-6-2q0-6-6-7H4q3-6 9-6z" fill="#7b4fd0" /><circle cx="13" cy="11" r="5.500" fill="#fff" /><path d="M12 8l5 2-4 4z" fill="#555" /><circle cx="8" cy="17" r="7.500" fill="#eaf4fd" /><circle cx="8" cy="15" r="2" fill="none" stroke="#2f80d0" strokeWidth="1.500" /><path d="M5 21q0-4 3-4t3 4z" fill="none" stroke="#2f80d0" strokeWidth="1.500" /></>,
  },
  {
    art: <><circle cx="12" cy="12" r="12" fill="#34a853" /><path d="M12 0a12 12 0 0 1 10.400 6H12L6 12 1.600 6A12 12 0 0 1 12 0z" fill="#db4437" /><path d="M22.400 6A12 12 0 0 1 12 24l5-9V6z" fill="#fbc116" /><circle cx="12" cy="12" r="5.800" fill="#fff" /><circle cx="12" cy="12" r="4.500" fill="#1a73e8" /></>,
  },
  {
    art: <><circle cx="12" cy="12" r="12" fill="#1b84cf" /><path d="M1 8Q4 0 13 0q10 1 11 11 0 5-7 5-4 0-3-3 1-6-6-6-4 0-7 1z" fill="#3fc6a4" /><path d="M1 8q4-8 13-8-9 2-6 7-4-1-7 1z" fill="#2aa7e0" /><path d="M9 13q0 6 6 7 4 0 7-2-4 6-10 6-5-2-5-7z" fill="#125ea8" /><circle cx="6" cy="15" r="3" fill="#7c7a78" /><path d="M0 24q0-6 6-6t6 6z" fill="#8d8b89" /></>,
  },
  { art: <><circle cx="14" cy="9" r="7.500" fill="none" stroke="#111" strokeWidth="2.500" /><path d="M9 14L2 23" stroke="#111" strokeWidth="3" /></> },
  { art: <path d="M4 6l7-1v7H4zM12 5l8-1v8h-8zM4 13h7v7l-7-1zM12 13h8v8l-8-1z" fill="#0a0a0a" /> },
]

const Taskbar = () => (
  <div className="flex h-[41px] border-t border-black bg-[#d5d5d5] text-black">
    <div className="ml-1 flex w-[680px] shrink-0 items-center border-l border-[#a8a8a8] pl-3">
      <Icon w={26} h={26} className="mt-1">
        <path d="M9 1h16v11h-4v4l-4-4H9z" fill="#000" stroke="none" />
        <path d="M12 5h10M12 8h10" stroke="#d5d5d5" />
        <circle cx="8.500" cy="16.500" r="8" fill="#d5d5d5" fillOpacity={0.8} stroke="#888" />
        <text x="8.500" y="21" fontSize="12" fontWeight="700" textAnchor="middle" fill="#222" stroke="none">٣</text>
      </Icon>
      <div
        dir="rtl"
        className="ml-2.5 w-[50px] text-center font-['DejaVu_Sans'] text-[10.500px] leading-[17px] tracking-tighter whitespace-nowrap"
      >
        <div>٠٦:٠٩ م</div>
        <div dir="ltr">٤٧/٠٤/١٨</div>
      </div>
      <span className="ml-3.5 w-3 font-['DejaVu_Sans'] text-[12px]">ع</span>
      <Icon w={14} className="ml-4">
        <path d="M1 13Q1 2 12 1M4.500 13Q4.500 5 13 4.500M8 13q0-4.500 5-5" stroke="#000" strokeWidth={1.200} />
        <circle cx="11.500" cy="12" r="1.500" fill="#000" />
      </Icon>
      <Icon w={16} h={14} className="ml-[7px]">
        <path d="M1 4.500h3l3.500-4v12L4 9H1zM10 5l5 5M15 5l-5 5" stroke="#000" strokeWidth={1.200} />
      </Icon>
      <Icon w={14} h={17} className="ml-[11px]">
        <rect x="1" y="4.500" width="8" height="8" rx="2" stroke="#000" strokeWidth={1.200} />
        <path d="M9 7l3-2v7l-3-2M2 1.500q4-2 8 0M2 15.500q4 2 8 0" stroke="#000" />
      </Icon>
      <Icon w={16} h={12} className="ml-2">
        <rect x="4.500" y="3.500" width="10" height="7" stroke="#000" />
        <path d="M6 5h7v4H6z" fill="#000" stroke="none" />
        <path d="M15.500 5.500v3M1 0v3M4 0v3M.5 3h4v3h-4zM2.500 6v3h2" stroke="#000" />
      </Icon>
    </div>
    <div className="-ml-1 flex">
      {taskIcons.map(({ art, open, active }, i) => (
        <div key={i} className={`flex w-[49px] flex-col items-center ${active ? 'bg-[#f0f0f0]' : ''}`}>
          <svg width="26" height="26" viewBox="-1 -1 26 26" className="mt-[7px] mr-px mb-[5px] overflow-visible">
            {art}
          </svg>
          {(open || active) && <div className={`h-0.5 bg-[#555] ${active ? 'w-full' : 'w-10'}`} />}
        </div>
      ))}
    </div>
  </div>
)

const Watermark = () => (
  <div className="pointer-events-none absolute top-[668px] left-[600px] flex w-[166px] flex-col items-center text-[#888] opacity-25">
    <div className="h-[58px] scale-x-[0.8] font-['DejaVu_Sans'] text-[58px] leading-[58px] font-bold whitespace-nowrap">
      مستقل
    </div>
    <div className="h-6 font-['Liberation_Sans'] text-[25px] leading-6 font-bold tracking-[0.05em]">mostaql.com</div>
  </div>
)

export default function App() {
  return (
    <div className="relative h-[768px] w-[1366px] overflow-hidden bg-[#f5f5f5] font-['Open_Sans','DejaVu_Sans',sans-serif]">
      <Gradients />
      <TitleBar />
      <Menu />
      <Ribbon />
      <div className="flex h-[533px]">
        <Rail />
        <main className="w-[963px] shrink-0">
          <Canvas />
          <PageTabs />
        </main>
        <VisualizationsPane />
        <DataPane />
      </div>
      <StatusBar />
      <Taskbar />
      <Watermark />
    </div>
  )
}
